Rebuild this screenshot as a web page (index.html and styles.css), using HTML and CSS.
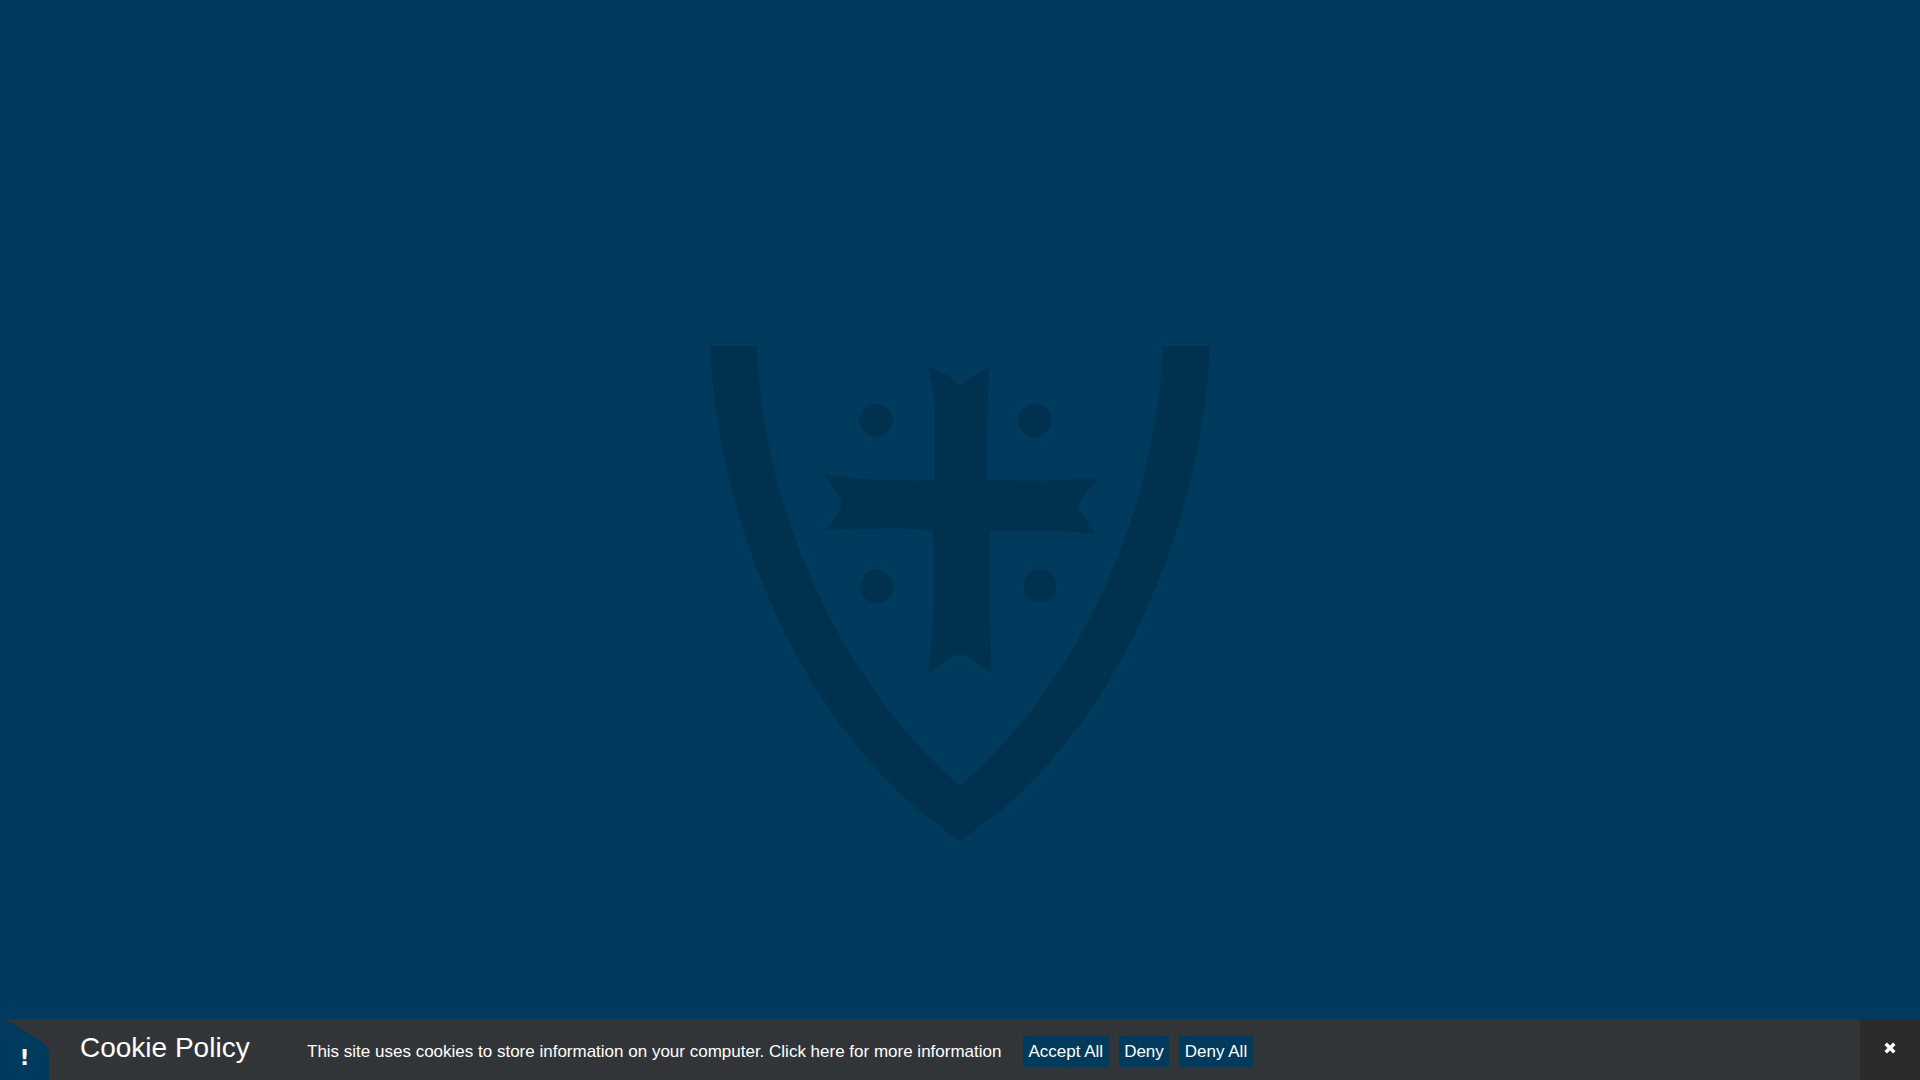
FILE: index.html
```html
<!DOCTYPE html>
<html lang="en">
<head>
<meta charset="utf-8">
<title>Cookie Policy</title>
<link rel="stylesheet" href="styles.css">
</head>
<body>
<main class="hero">
  <svg class="crest" viewBox="0 0 1920 1019" aria-hidden="true">
    <path d="M710 346H756.5C766 540 860 700 960 786C1060 700 1154 540 1163 346H1210C1200 560 1090 760 960 840C830 760 720 560 710 346Z"/>
    <path d="M929.3 368C942 371 952 377 960 386C968 378 978 372 989.3 368C987.5 400 986.7 440 986.7 479.3C1005 481 1025 481 1043 480.7C1062 480 1080 479 1098.7 477.3C1090 488 1084 496 1078.7 504C1077.5 506 1077.5 508 1079 510C1084 518 1090 526 1096.7 534.7C1080 532 1060 531 1043 530.7L990 530.7C989 570 989 620 992 674C982 667 973 660 966 656C962 654 958 654 954 656C947 660 938 667 928.7 674C932 640 934 610 934 586.7C934 565 934 545 932.7 531.3C925 530 915 529 910 528.7C880 528 850 529 823.3 530C833 522 838 514 841.3 506C842 503 841 499 839 496C834 488 829 481 822 473.3C840 476 855 478 870 479.3L935 480.7L935 420C935 400 932 385 929.3 368Z"/>
    <circle cx="876" cy="420.3" r="16.7"/>
    <circle cx="1034.7" cy="420.7" r="16.7"/>
    <circle cx="877" cy="586.3" r="16.7"/>
    <circle cx="1040" cy="586" r="16.7"/>
  </svg>
</main>
<section class="cookie-bar">
  <div class="alert-tab">
    <svg class="alert-shape" viewBox="0 0 49 61" aria-hidden="true"><path d="M4 0L40 21Q49 26 49 35V61H0V0Z"/></svg>
    <span class="alert-mark">!</span>
  </div>
  <h2 class="cookie-title">Cookie Policy</h2>
  <p class="cookie-text">This site uses cookies to store information on your computer. Click here for more information</p>
  <div class="cookie-actions">
    <a class="cookie-btn">Accept All</a>
    <a class="cookie-btn">Deny</a>
    <a class="cookie-btn">Deny All</a>
  </div>
  <div class="cookie-close">
    <svg viewBox="0 0 12 12" class="close-icon" aria-hidden="true"><path d="M1.7 1.7L10.3 10.3M10.3 1.7L1.7 10.3"/></svg>
  </div>
</section>
</body>
</html>
```
FILE: styles.css
```css
* { box-sizing: border-box; }
html, body { height: 100%; }
body {
  margin: 0;
  display: flex;
  flex-direction: column;
  background: #003b5d;
  font-family: "Liberation Sans", Arial, sans-serif;
  overflow: hidden;
}
.hero { flex: 1; min-height: 0; }
.crest { display: block; width: 100%; height: 100%; fill: #003250; }
.cookie-bar {
  flex: none;
  height: 61px;
  display: flex;
  align-items: center;
  background: #323538;
  color: #fff;
}
.alert-tab {
  position: relative;
  flex: none;
  width: 49px;
  height: 61px;
  color: #fff;
}
.alert-shape { position: absolute; inset: 0; width: 49px; height: 61px; fill: #003b5d; }
.alert-mark {
  position: absolute;
  left: 0;
  right: 0;
  top: 26px;
  text-align: center;
  font: bold 22px/26px "DejaVu Sans", sans-serif;
}
.cookie-title {
  margin: 0 0 3px 31px;
  width: 227px;
  flex: none;
  font-size: 28px;
  font-weight: 400;
  line-height: 32px;
}
.cookie-text {
  margin: 5px 0 0;
  font-size: 17px;
  line-height: 20px;
  white-space: nowrap;
}
.cookie-actions { display: flex; gap: 10px; margin: 4px 0 0 21.5px; }
.cookie-btn {
  display: block;
  height: 31px;
  padding: 0 5.5px;
  background: #003b5d;
  font-size: 17px;
  line-height: 31px;
  white-space: nowrap;
}
.cookie-close {
  margin-left: auto;
  flex: none;
  width: 60px;
  height: 61px;
  display: flex;
  align-items: center;
  justify-content: center;
  padding-bottom: 3px;
  background: #2b2b2b;
}
.close-icon { width: 12px; height: 12px; fill: none; stroke: #fff; stroke-width: 3.4; }
```
